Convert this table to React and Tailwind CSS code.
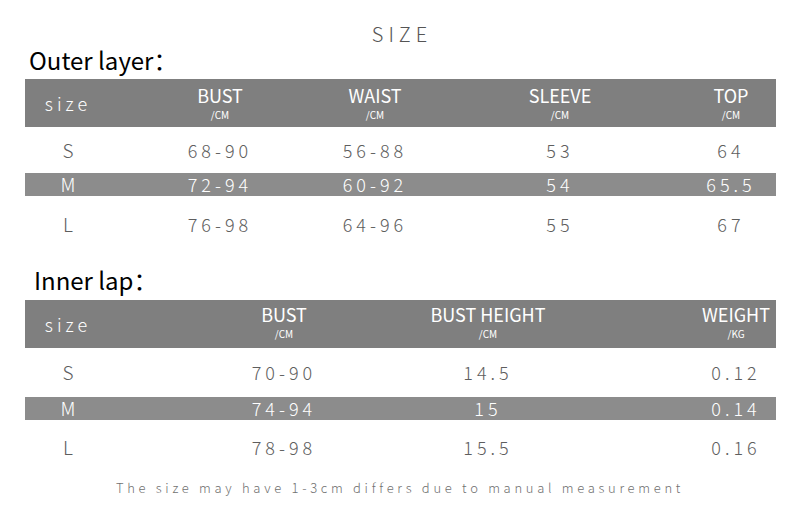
const font = { fontFamily: '"Noto Sans CJK SC", "Noto Sans", sans-serif' };

const outer = {
  cols: ['w-[86px]', 'ml-[59px] w-[100px]', 'ml-[55px] w-[100px]', 'ml-[85px] w-[100px]', 'ml-[81px] w-[80px]'],
  head: [
    ['BUST', '/CM'],
    ['WAIST', '/CM'],
    ['SLEEVE', '/CM'],
    ['TOP', '/CM'],
  ],
  rows: [
    ['S', '68-90', '56-88', '53', '64'],
    ['M', '72-94', '60-92', '54', '65.5'],
    ['L', '76-98', '64-96', '55', '67'],
  ],
  heights: ['h-[46px]', 'h-[23px]', 'h-[56px]'],
};

const inner = {
  cols: ['w-[86px]', 'ml-[123px] w-[100px]', 'ml-[94px] w-[120px]', 'ml-[148px] w-[80px]'],
  head: [
    ['BUST', '/CM'],
    ['BUST HEIGHT', '/CM'],
    ['WEIGHT', '/KG'],
  ],
  rows: [
    ['S', '70-90', '14.5', '0.12'],
    ['M', '74-94', '15', '0.14'],
    ['L', '78-98', '15.5', '0.16'],
  ],
  heights: ['h-[49px]', 'h-[23px]', 'h-[54px]'],
};

function SizeTable({ table, headPad }) {
  return (
    <div className="mx-[25px] w-[751px]">
      <div className="flex h-[48px] items-center bg-[#7f7f7f] text-white">
        <div className={`${table.cols[0]} text-center text-[18px] font-light tracking-[4px]`}>size</div>
        {table.head.map(([label, unit], i) => (
          <div key={label} className={`${table.cols[i + 1]} flex flex-col items-center ${headPad}`}>
            <span className="text-[18px] font-normal leading-[20px] whitespace-nowrap">{label}</span>
            <span className="mt-[4px] text-[10px] font-normal leading-[12px]">{unit}</span>
          </div>
        ))}
      </div>
      {table.rows.map((row, r) => (
        <div
          key={row[0]}
          className={`flex items-center ${table.heights[r]} ${r === 1 ? 'bg-[#8c8c8c] text-white' : 'text-[#5e5e5e]'}`}
        >
          {row.map((cell, i) => (
            <div
              key={i}
              className={`${table.cols[i]} text-center font-light ${i === 0 ? 'text-[19px]' : 'text-[18px] tracking-[4px]'}`}
            >
              {cell}
            </div>
          ))}
        </div>
      ))}
    </div>
  );
}

export default function App() {
  return (
    <div className="w-[800px] h-[520px] bg-white flex flex-col" style={font}>
      <div className="pt-[20px] h-[48px] flex items-center justify-center">
        <span className="text-[20px] font-light tracking-[5px] text-[#555] leading-[28px] pl-[4px]">SIZE</span>
      </div>
      <div className="h-[31px] pl-[29px] text-[24px] leading-[24px] text-black">Outer layer：</div>
      <SizeTable table={outer} headPad="" />
      <div className="h-[48px] pl-[34px] flex items-end pb-[8px] text-[24px] leading-[24px] text-black">Inner lap：</div>
      <SizeTable table={inner} headPad="-mt-[4px]" />
      <div className="h-[28px] flex items-center justify-center text-[13px] font-light tracking-[3.7px] text-[#707070]">
        The size may have 1-3cm differs due to manual measurement
      </div>
    </div>
  );
}
